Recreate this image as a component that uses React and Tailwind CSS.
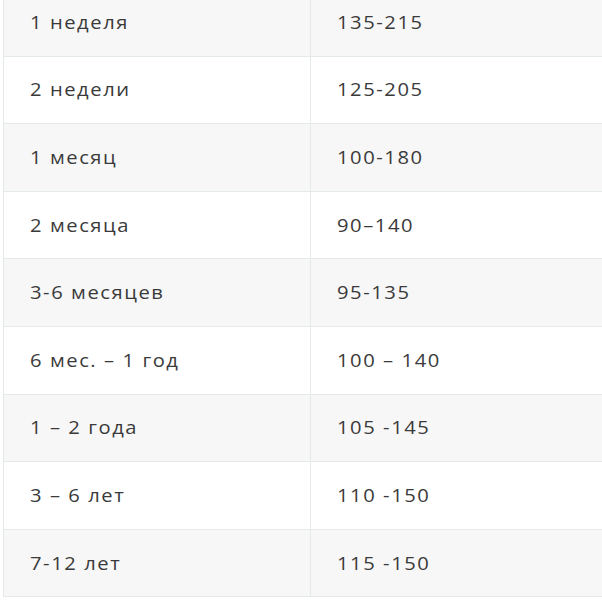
import React from "react";

const rows = [
  ["1 неделя", "135-215"],
  ["2 недели", "125-205"],
  ["1 месяц", "100-180"],
  ["2 месяца", "90–140"],
  ["3-6 месяцев", "95-135"],
  ["6 мес. – 1 год", "100 – 140"],
  ["1 – 2 года", "105 -145"],
  ["3 – 6 лет", "110 -150"],
  ["7-12 лет", "115 -150"],
];

// the text in this table is set wide, so each cell label is stretched a little sideways
const Cell = ({ children, className = "" }) => (
  <td className={`border border-[#e4ebe6] pl-[26px] align-middle ${className}`}>
    <span className="inline-block origin-left scale-x-[1.12] tracking-[1.4px] whitespace-nowrap">
      {children}
    </span>
  </td>
);

const App = () => {
  return (
    <div className="w-[602px] h-[600px] overflow-hidden bg-white">
      <table
        className="-mt-[12px] ml-[3px] w-[640px] border-collapse text-[18px] text-[#3a3a3a]"
        style={{ fontFamily: '"Open Sans", "Noto Sans", sans-serif' }}
      >
        <tbody>
          {rows.map(([age, value], i) => (
            <tr
              key={age}
              className={`h-[67.6px] ${i % 2 === 0 ? "bg-[#f7f7f7]" : "bg-white"}`}
            >
              <Cell className="w-[307px]">{age}</Cell>
              <Cell>{value}</Cell>
            </tr>
          ))}
        </tbody>
      </table>
    </div>
  );
};

export default App;
